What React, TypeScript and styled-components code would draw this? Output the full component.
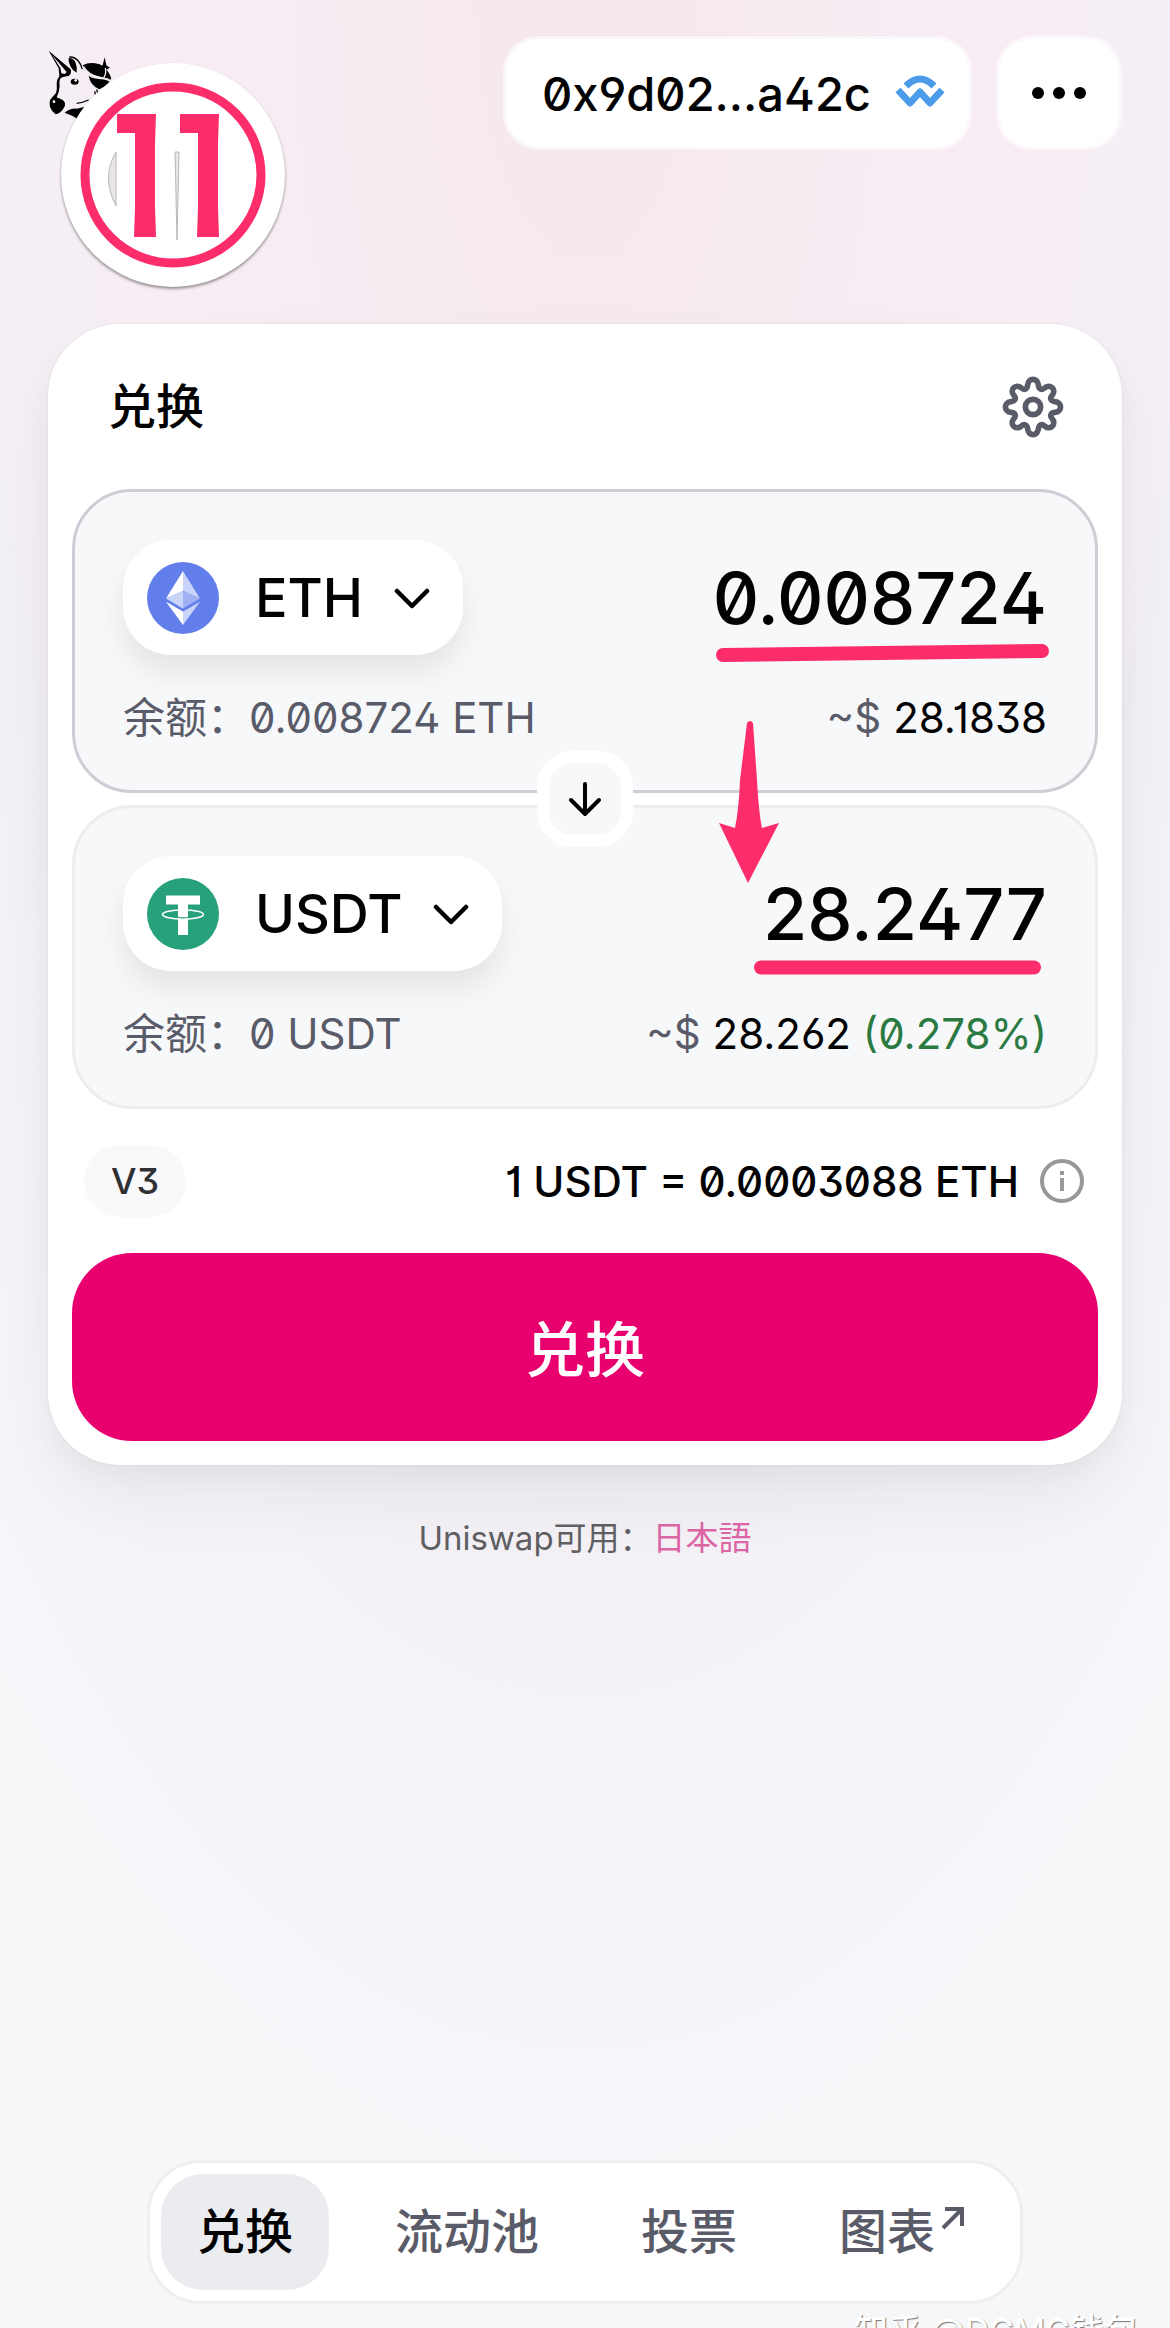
import React from 'react';
import styled, { createGlobalStyle } from 'styled-components';

const ink = '#020203';
const muted = '#5a5b68';
const marker = '#fd2d6b';

const GlobalStyle = createGlobalStyle`
  * { box-sizing: border-box; }
  body {
    margin: 0;
    font-family: Inter, "Noto Sans CJK SC", sans-serif;
    font-feature-settings: 'ss01' on, 'ss02' on, 'cv01' on, 'cv03' on;
    color: ${ink};
    background: #f6f7f9;
  }
  button, input { font: inherit; font-feature-settings: inherit; color: inherit; margin: 0; }
  svg { display: block; flex: none; }
`;

const Page = styled.div`
  position: relative;
  display: flex;
  flex-direction: column;
  min-height: 100vh;
  padding: 36px 48px 24px;
  overflow: hidden;
  background:
    radial-gradient(ellipse 80% 95% at 50% 0%, #f5e8ec 0%, #f6ebf1 25%, #f8edf5 48%, #f3f0f5 66%, rgba(244, 244, 248, 0.9) 82%, rgba(246, 247, 249, 0) 100%),
    #f6f7f9;
`;

const Header = styled.header`
  display: flex;
  align-items: flex-start;
  gap: 24px;
  height: 288px;
`;

const Logo = styled.a`
  display: block;
  padding-top: 12px;
  margin-right: auto;
`;

const Pill = styled.button`
  display: flex;
  align-items: center;
  gap: 24px;
  height: 114px;
  padding: 0 24px 0 36px;
  border: 3px solid rgba(255, 255, 255, 0.6);
  border-radius: 36px;
  background: #fff;
  background-clip: padding-box;
  font-size: 47px;
  font-weight: 500;
`;

const MenuButton = styled(Pill)`
  width: 126px;
  padding: 0;
  justify-content: center;
`;

const Card = styled.main`
  padding: 24px;
  border-radius: 72px;
  background: #fff;
  box-shadow: 0 0 3px rgba(0, 0, 0, 0.06), 0 12px 24px rgba(0, 0, 0, 0.03), 0 36px 72px rgba(0, 0, 0, 0.05);
`;

const CardHead = styled.div`
  display: flex;
  align-items: center;
  justify-content: space-between;
  height: 141px;
  padding: 0 31px 24px 36px;
`;

const Title = styled.h1`
  margin: 0;
  font-size: 48px;
  line-height: 60px;
  font-weight: 500;
`;

const IconButton = styled.button`
  display: flex;
  padding: 0;
  border: 0;
  background: none;
  color: ${muted};
`;

const Panels = styled.div`
  display: flex;
  flex-direction: column;
  align-items: center;
`;

const Panel = styled.section<{ $active?: boolean }>`
  width: 100%;
  height: 304px;
  padding: 48px;
  border: 3px solid ${(p) => (p.$active ? '#cdcdd5' : '#ededef')};
  border-radius: 60px;
  background: #f7f8fa;
`;

const PanelRow = styled.div`
  display: flex;
  align-items: center;
  justify-content: space-between;
`;

const TokenButton = styled.button`
  display: flex;
  flex: none;
  align-items: center;
  height: 115px;
  padding: 0 33px 0 24px;
  border: 0;
  border-radius: 48px;
  background: #fff;
  box-shadow: 0 18px 30px rgba(0, 0, 0, 0.08);
  font-size: 54px;
  font-weight: 500;
`;

const TokenName = styled.span`
  margin: 0 31px 0 36px;
`;

const Amount = styled.input`
  width: 100%;
  min-width: 0;
  padding: 0;
  border: 0;
  outline: 0;
  background: none;
  font-size: 72px;
  font-weight: 500;
  text-align: right;
`;

const Details = styled(PanelRow)`
  margin-top: 36px;
  font-size: 42px;
  line-height: 54px;
  color: ${muted};
`;

const Strong = styled.span`
  color: ${ink};
`;

const Gain = styled.span`
  color: #2a7a41;
`;

const SwitchButton = styled.button`
  z-index: 1;
  display: flex;
  align-items: center;
  justify-content: center;
  width: 96px;
  height: 96px;
  margin: -42px 0;
  padding: 0;
  border: 12px solid #fff;
  border-radius: 36px;
  background: #f7f8fa;
`;

const RateRow = styled.div`
  display: flex;
  align-items: center;
  justify-content: space-between;
  height: 144px;
  padding: 0 12px;
`;

const Version = styled.span`
  padding: 0 27px;
  border-radius: 36px;
  background: #f9f9fb;
  color: #303034;
  font-size: 36px;
  font-weight: 500;
  line-height: 72px;
`;

const Rate = styled.div`
  display: flex;
  align-items: center;
  gap: 19px;
  font-size: 42px;
  font-weight: 500;
`;

const Submit = styled.button`
  display: block;
  width: 100%;
  height: 188px;
  padding: 0 0 4px;
  border: 0;
  border-radius: 60px;
  background: #e8006f;
  color: #fff;
  font-size: 60px;
  font-weight: 500;
`;

const Locale = styled.p`
  margin: 49px 0 0;
  text-align: center;
  color: #5f5f63;
  font-size: 33px;
  line-height: 48px;
`;

const LocaleLink = styled.a`
  color: #dc65a5;
  text-decoration: none;
`;

const Nav = styled.nav`
  display: flex;
  align-self: center;
  gap: 30px;
  margin-top: auto;
  padding: 11px;
  border: 3px solid #efeff1;
  border-radius: 54px;
  background: #fff;
`;

const NavLink = styled.a<{ $active?: boolean }>`
  display: flex;
  align-items: flex-start;
  gap: 6px;
  padding: 28px 36px;
  border-radius: 42px;
  background: ${(p) => (p.$active ? '#ebecf0' : 'transparent')};
  color: ${(p) => (p.$active ? ink : muted)};
  font-size: 48px;
  font-weight: 500;
  line-height: 60px;
  text-decoration: none;
`;

const StepBadge = styled.div`
  position: absolute;
  top: 63px;
  left: 61px;
  display: flex;
  width: 224px;
  height: 224px;
  border-radius: 50%;
  background: #fff;
  box-shadow: 0 2px 3px rgba(0, 0, 0, 0.4);
`;

const Overlay = styled.svg`
  position: absolute;
  pointer-events: none;
`;

const ArrowMark = styled(Overlay)` top: 720px; left: 718px; `;
const UpperMark = styled(Overlay)` top: 641px; left: 714px; `;
const LowerMark = styled(Overlay)` top: 958px; left: 752px; `;

const Watermark = styled.div`
  position: absolute;
  right: 32px;
  bottom: -30px;
  white-space: nowrap;
  color: #fff;
  font-size: 34px;
  font-weight: 500;
  line-height: 54px;
  text-shadow: 1px 1px 1px #77777c;
`;

const Chevron = () => (
  <svg width="36" height="24" viewBox="0 0 36 24" fill="none" stroke="currentColor" strokeWidth="4.500" strokeLinecap="round" strokeLinejoin="round" aria-hidden="true">
    <path d="M3 5l15 15L33 5" />
  </svg>
);

const EthIcon = () => (
  <svg width="72" height="72" viewBox="0 0 72 72" aria-hidden="true">
    <circle cx="36" cy="36" r="36" fill="#627eea" />
    <path d="M36 9v20l17 7.500z" fill="#c9d2f8" />
    <path d="M36 9L19 36.500 36 29z" fill="#fff" />
    <path d="M36 46.500l17-10L36 29z" fill="#9fb0f3" />
    <path d="M19 36.500l17 10V29z" fill="#cbd4f9" />
    <path d="M36 63V49.500l17-9.800z" fill="#c9d2f8" />
    <path d="M36 63V49.500l-17-9.800z" fill="#fff" />
  </svg>
);

const UsdtIcon = () => (
  <svg width="72" height="72" viewBox="0 0 72 72" aria-hidden="true">
    <circle cx="36" cy="36" r="36" fill="#26a17b" />
    <path d="M19 17.500h34v9H41V57H31V26.500H19z" fill="#fff" />
    <ellipse cx="36" cy="36.500" rx="20.500" ry="4.500" fill="none" stroke="#fff" strokeWidth="1.500" />
    <path d="M31 39.500q5 .6 10 0" fill="none" stroke="#26a17b" strokeWidth="1.200" />
  </svg>
);

const Gear = () => (
  <svg width="68" height="68" viewBox="0 0 24 24" fill="none" stroke="currentColor" strokeWidth="2" aria-hidden="true">
    <circle cx="12" cy="12" r="2.700" />
    <path
      strokeLinejoin="round"
      d="M10.100 4.300C10.300 1.600 13.700 1.600 13.900 4.300C14.100 5.800 15.100 6.200 16.200 5.200C18.100 3.600 20.400 5.900 18.800 7.800C17.800 8.900 18.200 9.900 19.700 10.100C22.400 10.300 22.400 13.700 19.700 13.900C18.200 14.100 17.800 15.100 18.800 16.200C20.400 18.100 18.100 20.400 16.200 18.800C15.100 17.800 14.100 18.200 13.900 19.700C13.700 22.400 10.300 22.400 10.100 19.700C9.900 18.200 8.900 17.800 7.800 18.800C5.900 20.400 3.600 18.100 5.200 16.200C6.200 15.100 5.800 14.100 4.300 13.900C1.600 13.700 1.600 10.300 4.300 10.100C5.800 9.900 6.200 8.900 5.200 7.800C3.600 5.900 5.900 3.600 7.800 5.200C8.900 6.200 9.900 5.800 10.100 4.300z"
    />
  </svg>
);

const Unicorn = () => (
  <svg width="72" height="72" viewBox="12 12 216 216" fill="#000" aria-hidden="true">
    <path d="M14 20L80 76q4 12-6 20-24 2-26 10-3 6-1 20-1 20-9 34 24 8 25 18 2 10-6 18-10 14-22 15-12-8-17-22-3-16 2-24l16-18q4-10 2-28 0-12 8-22l-2-24z" />
    <path d="M24 32l44 52-6 6-10-2-3-16z" fill="#f6eef5" />
    <path d="M74 42q14 0 20 12 6 14 4 32-12-6-18-18-8-12-6-26z" />
    <path d="M76 39q16-1 27 12 8 10 12 24" fill="none" stroke="#000" strokeWidth="4" />
    <path d="M116 64q18-10 38-6 28 4 40 28 8 12 8 20-22-6-40-8-30-6-46-34z" />
    <path d="M134 96q16 12 66 10-6 14-20 22l-14 8q-26-10-32-40z" />
    <path d="M118 68q18 28 48 32 18 2 32 10" fill="none" stroke="#f6eef5" strokeWidth="5" />
    <path d="M182 40l5 24 11 7-11 6-5 24-6-24-10-6 10-7z" />
    <path d="M184 72q4 14-4 28" fill="none" stroke="#f6eef5" strokeWidth="4" />
    <ellipse cx="92" cy="113" rx="12" ry="9" />
    <circle cx="95" cy="109" r="4" fill="#fff" />
    <circle cx="30" cy="173" r="4" fill="#fff" />
    <path d="M98 178q18-2 36-10M158 136l6 22M152 142l4 16" fill="none" stroke="#000" strokeWidth="4" />
    <path d="M62 206q18-14 36-12l34-8-32 38q-16-10-38-18z" />
  </svg>
);

interface TokenPanelProps {
  id: string;
  label: string;
  symbol: string;
  icon: React.ReactNode;
  balance: string;
  amount: string;
  fiat: string;
  change?: string;
  active?: boolean;
}

const TokenPanel = ({ id, label, symbol, icon, balance, amount, fiat, change, active }: TokenPanelProps) => (
  <Panel $active={active}>
    <PanelRow>
      <TokenButton type="button">
        {icon}
        <TokenName>{symbol}</TokenName>
        <Chevron />
      </TokenButton>
      <Amount id={id} aria-label={label} inputMode="decimal" defaultValue={amount} />
    </PanelRow>
    <Details>
      <span>余额：{balance} {symbol}</span>
      <span>
        ~$ <Strong>{fiat}</Strong>
        {change && <Gain> ({change})</Gain>}
      </span>
    </Details>
  </Panel>
);

export default function App() {
  return (
    <Page>
      <GlobalStyle />
      <Header>
        <Logo href="#" aria-label="Uniswap"><Unicorn /></Logo>
        <Pill type="button">
          0x9d02...a42c
          <svg width="50" height="42" viewBox="0 0 50 42" fill="none" stroke="#4b9bea" strokeWidth="7" strokeLinejoin="round" aria-hidden="true">
            <path d="M11 14Q25 0 39 14" />
            <path d="M3 18l12 13 10-11 10 11 12-13" />
          </svg>
        </Pill>
        <MenuButton type="button" aria-label="菜单">
          <svg width="56" height="14" viewBox="0 0 56 14" aria-hidden="true">
            <circle cx="7" cy="7" r="6" /><circle cx="28" cy="7" r="6" /><circle cx="49" cy="7" r="6" />
          </svg>
        </MenuButton>
      </Header>

      <Card>
        <CardHead>
          <Title>兑换</Title>
          <IconButton type="button" aria-label="设置"><Gear /></IconButton>
        </CardHead>
        <Panels>
          <TokenPanel id="pay" label="支付" symbol="ETH" icon={<EthIcon />} balance="0.008724" amount="0.008724" fiat="28.1838" active />
          <SwitchButton type="button" aria-label="切换">
            <svg width="36" height="36" viewBox="0 0 36 36" fill="none" stroke="currentColor" strokeWidth="4" strokeLinecap="round" strokeLinejoin="round" aria-hidden="true">
              <path d="M18 3v30M4 19l14 14 14-14" />
            </svg>
          </SwitchButton>
          <TokenPanel id="receive" label="接收" symbol="USDT" icon={<UsdtIcon />} balance="0" amount="28.2477" fiat="28.262" change="0.278%" />
        </Panels>
        <RateRow>
          <Version>V3</Version>
          <Rate>
            1 USDT = 0.0003088 ETH
            <svg width="48" height="48" viewBox="0 0 48 48" fill="none" stroke="#98989b" strokeWidth="4" aria-hidden="true">
              <circle cx="24" cy="24" r="20" /><path d="M24 21v13M24 14v4" />
            </svg>
          </Rate>
        </RateRow>
        <Submit type="button">兑换</Submit>
      </Card>

      <Locale>Uniswap可用：<LocaleLink href="#" lang="ja">日本語</LocaleLink></Locale>

      <Nav>
        <NavLink href="#" $active>兑换</NavLink>
        <NavLink href="#">流动池</NavLink>
        <NavLink href="#">投票</NavLink>
        <NavLink href="#">
          图表
          <svg width="32" height="30" viewBox="0 0 32 30" fill="none" stroke="currentColor" strokeWidth="4" aria-hidden="true">
            <path d="M4 7h17v17M21 7L2 26" />
          </svg>
        </NavLink>
      </Nav>

      <StepBadge>
        <svg width="224" height="224" viewBox="0 0 224 224" role="img" aria-label="11">
          <circle cx="112" cy="112" r="88" fill="none" stroke={marker} strokeWidth="9" />
          <path d="M55 89q-15 25 0 54zM114 89h4l-2 88z" fill="#e9e5e8" stroke="#bbb6ba" strokeWidth="1" />
          <path d="M56 51h39l-1 30v63l1 30H73l1-30V70H56zM119 51h39l-1 30v63l1 30h-22l1-30V70h-18z" fill={marker} />
        </svg>
      </StepBadge>
      <UpperMark width="338" height="26" viewBox="0 0 338 26" aria-hidden="true">
        <path d="M9 14L328 10" stroke={marker} strokeWidth="14" strokeLinecap="round" />
      </UpperMark>
      <ArrowMark width="62" height="164" viewBox="0 0 62 164" aria-hidden="true">
        <path d="M29 3q3-4 6 0l4 57q2 35 5 48l17-5-31 60L1 103l16 5q4-20 5-48z" fill={marker} />
      </ArrowMark>
      <LowerMark width="292" height="20" viewBox="0 0 292 20" aria-hidden="true">
        <path d="M9 9.500h273" stroke={marker} strokeWidth="14" strokeLinecap="round" />
      </LowerMark>
      <Watermark>知乎 @DCMC钱包</Watermark>
    </Page>
  );
}
